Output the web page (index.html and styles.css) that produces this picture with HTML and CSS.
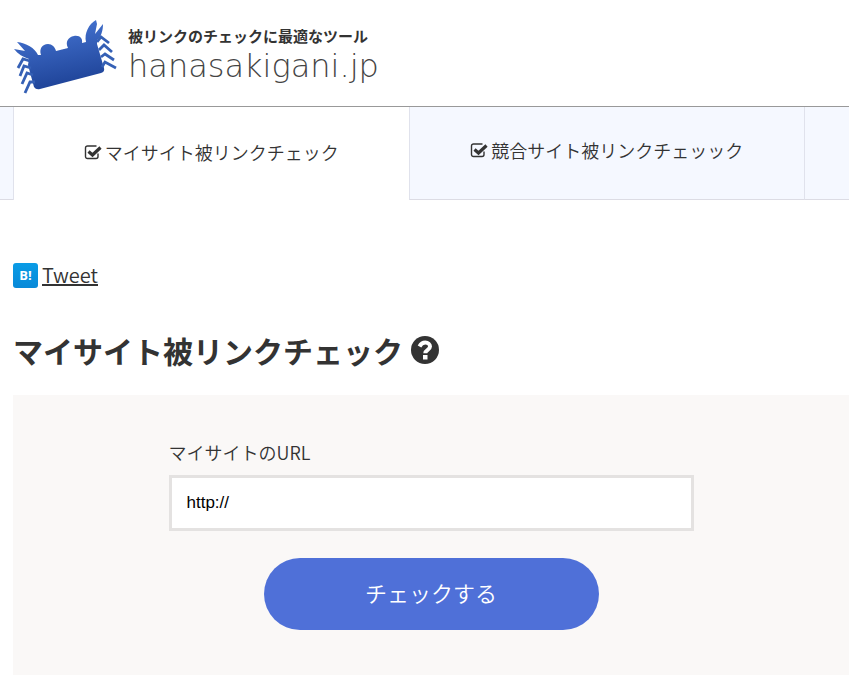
FILE: index.html
```
<!DOCTYPE html>
<html lang="ja">
<head>
    <meta charset="utf-8">
    <meta name="viewport" content="width=device-width, initial-scale=1">
    <title>マイサイト被リンクチェック | hanasakigani.jp</title>
    <link rel="stylesheet" href="styles.css">
</head>
<body>
    <header class="header">
        <svg class="crab" viewBox="0 0 104 76" aria-hidden="true">
            <defs>
                <linearGradient id="shell" x1="0" y1="0" x2="0.25" y2="1">
                    <stop offset="0.2" stop-color="#416fcc"/>
                    <stop offset="1" stop-color="#20459a"/>
                </linearGradient>
            </defs>
            <path fill="url(#shell)" d="M15 39 C9 37 4 34 0 29 L11 31 L3 22 C12 23 21 28 24 35 L27 35 C25 29 28 24 34 24 C38 24 41 27 42 31 L54 28 C51 22 54 17 60 16 C66 15 69 19 68 23 L72 22 C70 13 75 4 82 0 L83 4 L81 14 L89 4 C89 11 87 17 83 20 L83 24 L90 48 Q91 52 87 53 L26 69 Q22 70 20 67 L14 45 Z"/>
            <g fill="none" stroke="#3560b5" stroke-width="2.8">
                <path d="M16 41 L9 39 L4 48 M17 48 L10 46 L6 56 M19 55 L13 53 L8 64 M21 62 L16 62 L11 73"/>
                <path d="M83 22 L87 17 L95 23 M85 30 L90 25 L98 32 M87 37 L91 34 L100 40 M88 47 L91 42 L102 48"/>
            </g>
        </svg>
        <div class="brand">
            <p class="tagline">被リンクのチェックに最適なツール</p>
            <a class="logo" href="#">hanasakigani.jp</a>
        </div>
    </header>

    <svg class="symbols" aria-hidden="true">
        <symbol id="check" viewBox="0 0 18 16">
            <path d="M14 9.500V12.500a2 2 0 0 1-2 2H3.500a2 2 0 0 1-2-2V4a2 2 0 0 1 2-2H12.500" fill="none" stroke="currentColor" stroke-width="1.400"/>
            <path d="M4.500 7.500 L8.500 11 L16.500 3.500" fill="none" stroke="currentColor" stroke-width="3.200"/>
        </symbol>
    </svg>

    <nav class="tabs">
        <span class="tab"></span>
        <a class="tab active" href="#"><svg class="check"><use href="#check"/></svg>マイサイト被リンクチェック</a>
        <a class="tab" href="#"><svg class="check"><use href="#check"/></svg>競合サイト被リンクチェッック</a>
        <span class="tab"></span>
    </nav>

    <main class="main">
        <div class="share">
            <a class="hatena" href="#" aria-label="はてなブックマーク">B!</a>
            <a href="#">Tweet</a>
        </div>

        <h1 class="title">マイサイト被リンクチェック
            <svg class="help" viewBox="0 0 28 28" aria-hidden="true">
                <circle cx="14" cy="14" r="14" fill="currentColor"/>
                <path d="M8.500 10.500 C10 7.500 12 6.500 14.300 6.500 C17 6.500 19 8.200 19 10.600 C19 14 14.300 13.700 14.300 17.300" fill="none" stroke="#fff" stroke-width="4"/>
                <rect x="12" y="19" width="4.500" height="4.500" fill="#fff"/>
            </svg>
        </h1>

        <form class="panel">
            <div class="field">
                <label for="url">マイサイトのURL</label>
                <input id="url" type="text" value="http://">
            </div>
            <button class="submit" type="button">チェックする</button>
        </form>
    </main>
</body>
</html>
```

FILE: styles.css
```
* {
    box-sizing: border-box;
}

body {
    margin: 0;
    color: #333;
    background: #fff;
    font-family: "Noto Sans CJK JP", sans-serif;
    font-size: 18px;
    font-weight: 350;
}

a {
    color: inherit;
}

.header {
    display: flex;
    gap: 10px;
    padding: 20px 14px 10px;
    border-bottom: 1px solid #999;
}

.crab {
    width: 104px;
    height: 76px;
}

.tagline {
    margin: 4px 0 0;
    font-size: 15px;
    line-height: 24px;
    font-weight: 700;
}

.logo {
    display: block;
    color: #444;
    font-family: "DejaVu Sans", sans-serif;
    font-size: 32px;
    font-weight: 200;
    line-height: 36px;
    text-decoration: none;
}

.symbols {
    display: none;
}

.tabs {
    display: grid;
    grid-template-columns: 13px 1fr 1fr 45px;
}

.tab {
    display: flex;
    align-items: center;
    justify-content: center;
    gap: 3px;
    min-height: 93px;
    padding-bottom: 6px;
    background: #f5f8ff;
    border-bottom: 1px solid #dcdce4;
    border-left: 1px solid #e0e2ec;
    text-decoration: none;
}

.tab:first-child {
    border-left: 0;
}

.active {
    padding-bottom: 3px;
    background: #fff;
    border-bottom: 0;
}

.check {
    width: 18px;
    height: 16px;
}

.main {
    padding: 60px 0 0 13px;
}

.share {
    display: flex;
    align-items: center;
    gap: 4px;
    font-size: 20px;
    line-height: 30px;
}

.hatena {
    width: 25px;
    height: 25px;
    border-radius: 3px;
    background: linear-gradient(#0a9ce6, #0889d8);
    color: #fff;
    font: bold 13px/25px "Open Sans", sans-serif;
    text-align: center;
    text-decoration: none;
}

.title {
    display: flex;
    align-items: center;
    gap: 8px;
    margin: 36px 0 21px;
    font-size: 30px;
    line-height: 48px;
    font-weight: 700;
}

.help {
    width: 28px;
    height: 28px;
}

.panel {
    padding: 42px 20px 45px;
    background: #faf8f7;
}

.field {
    max-width: 525px;
    margin: 0 auto 27px;
}

.field label {
    display: block;
    margin-bottom: 8px;
    line-height: 30px;
}

.field input {
    display: block;
    width: 100%;
    padding: 14px 15px;
    border: 3px solid #e4e2e1;
    background: #fff;
    color: #000;
    font: 17px/22px "Liberation Sans", sans-serif;
}

.submit {
    display: block;
    width: 100%;
    max-width: 335px;
    margin: 0 auto;
    padding: 16px 20px 20px;
    border: 0;
    border-radius: 36px;
    background: #4f70d8;
    color: #fff;
    font: 350 22px/36px "Noto Sans CJK JP", sans-serif;
}
```
